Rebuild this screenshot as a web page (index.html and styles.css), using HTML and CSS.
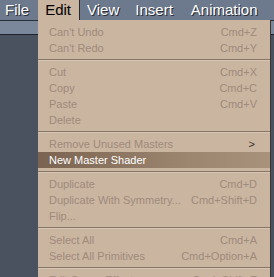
FILE: index.html
```html
<!DOCTYPE html>
<html lang="en">
<head>
  <meta charset="UTF-8">
  <title>Edit menu</title>
  <link rel="stylesheet" href="styles.css">
</head>
<body>
  <div class="menubar">
    <span class="menu-title file">File</span>
    <span class="menu-title open">Edit</span>
    <span class="menu-title view">View</span>
    <span class="menu-title insert">Insert</span>
    <span class="menu-title anim">Animation</span>
  </div>

  <div class="workspace">
    <div class="toolbar"></div>
    <div class="canvas"></div>

    <div class="dropdown">
      <div class="item disabled"><span>Can't Undo</span><span>Cmd+Z</span></div>
      <div class="item disabled"><span>Can't Redo</span><span>Cmd+Y</span></div>
      <div class="sep"></div>
      <div class="item disabled"><span>Cut</span><span>Cmd+X</span></div>
      <div class="item disabled"><span>Copy</span><span>Cmd+C</span></div>
      <div class="item disabled"><span>Paste</span><span>Cmd+V</span></div>
      <div class="item disabled"><span>Delete</span><span></span></div>
      <div class="sep"></div>
      <div class="item disabled"><span>Remove Unused Masters</span><span class="arrow">&gt;</span></div>
      <div class="item active"><span>New Master Shader</span><span></span></div>
      <div class="sep"></div>
      <div class="item disabled"><span>Duplicate</span><span>Cmd+D</span></div>
      <div class="item disabled"><span>Duplicate With Symmetry...</span><span>Cmd+Shift+D</span></div>
      <div class="item disabled"><span>Flip...</span><span></span></div>
      <div class="sep"></div>
      <div class="item disabled"><span>Select All</span><span>Cmd+A</span></div>
      <div class="item disabled"><span>Select All Primitives</span><span>Cmd+Option+A</span></div>
      <div class="sep"></div>
      <div class="item disabled"><span>Edit Scene Effects...</span><span>Cmd+Shift+T</span></div>
    </div>
  </div>
</body>
</html>
```

FILE: styles.css
```css
body {
  margin: 0;
  width: 274px;
  height: 277px;
  overflow: hidden;
  background: #4b525f;
  font-family: "Liberation Sans", Arial, sans-serif;
}

.menubar {
  display: flex;
  height: 20px;
  background: #6d798c;
  white-space: nowrap;
}

.menu-title {
  height: 20px;
  line-height: 20px;
  padding: 0 8px;
  font-size: 15px;
  color: #fff;
  text-shadow: 1px 1px 0 #262b34;
}

.menu-title.file {
  padding: 0 9px 0 5px;
}

.menu-title.open {
  background: #cab5a1;
  color: #000;
  text-shadow: none;
  padding: 0 8px 0 7px;
  border-right: 1px solid #2b2b2b;
}

.menu-title.view {
  padding-left: 7px;
}

.menu-title.insert {
  padding-left: 8px;
}

.menu-title.anim {
  padding-left: 10px;
}

.workspace {
  position: relative;
  height: 257px;
}

.toolbar {
  height: 13px;
  background: #7b879a;
  border-top: 1px solid #2a303a;
  border-bottom: 1px solid #1d222b;
}

.canvas {
  height: 242px;
  background: #4b525f;
}

.dropdown {
  position: absolute;
  left: 38px;
  top: 0;
  width: 232px;
  background: #cab5a1;
  border-right: 1px solid #3a3530;
  padding-top: 4px;
  font-size: 11px;
  white-space: nowrap;
}

.item {
  display: flex;
  justify-content: space-between;
  height: 16px;
  line-height: 16px;
  padding: 0 13px 0 11px;
}

.item.disabled {
  color: #9f8a7b;
}

.item.active {
  color: #fff;
  background: linear-gradient(to right, #7a6350, #9a846e 60%, #a8927c);
}

.arrow {
  color: #3a3028;
  padding-right: 2px;
}

.sep {
  height: 1px;
  margin: 3px 0;
  background: #877565;
  border-bottom: 1px solid #d8c6b4;
}
```
